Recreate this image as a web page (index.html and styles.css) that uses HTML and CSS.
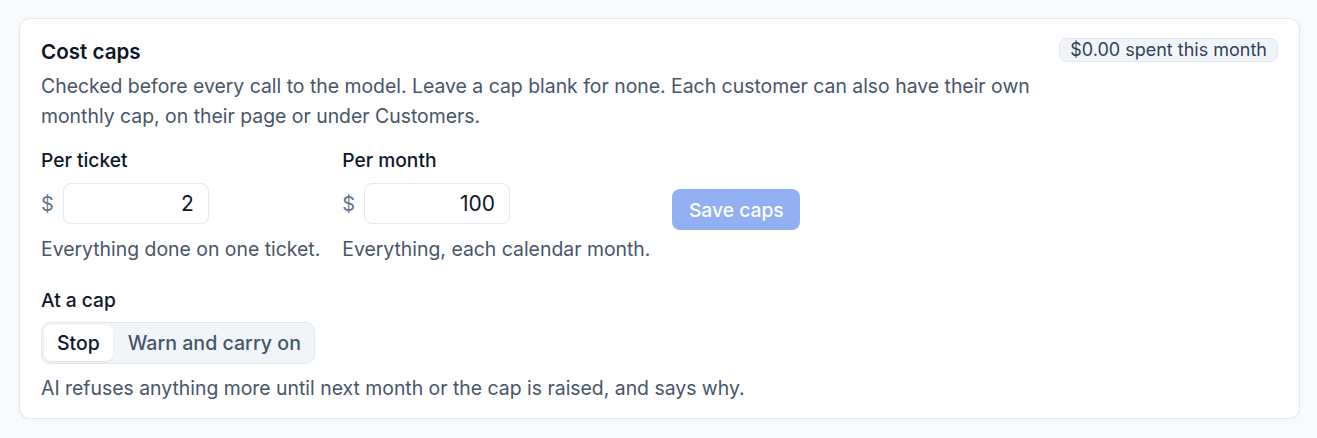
FILE: index.html
```html
<!DOCTYPE html>
<html lang="en">
<head>
<meta charset="utf-8">
<title>Cost caps</title>
<link rel="stylesheet" href="styles.css">
</head>
<body>
<section class="card">
  <div class="head">
    <div class="head-text">
      <h2 class="title">Cost caps</h2>
      <p class="desc">Checked before every call to the model. Leave a cap blank for none. Each customer can also have their own monthly cap, on their page or under Customers.</p>
    </div>
    <span class="badge">$0.00 spent this month</span>
  </div>

  <div class="caps">
    <div class="field">
      <label class="label" for="ticket">Per ticket</label>
      <div class="money">
        <span class="cur">$</span>
        <input class="input" id="ticket" type="text" value="2">
      </div>
      <p class="hint">Everything done on one ticket.</p>
    </div>
    <div class="field">
      <label class="label" for="month">Per month</label>
      <div class="money">
        <span class="cur">$</span>
        <input class="input" id="month" type="text" value="100">
      </div>
      <p class="hint">Everything, each calendar month.</p>
    </div>
    <button class="save" type="button" disabled>Save caps</button>
  </div>

  <div class="atcap">
    <div class="label">At a cap</div>
    <div class="seg">
      <button class="seg-btn active" type="button">Stop</button>
      <button class="seg-btn wide" type="button">Warn and carry on</button>
    </div>
    <p class="hint last">AI refuses anything more until next month or the cap is raised, and says why.</p>
  </div>
</section>
</body>
</html>
```

FILE: styles.css
```css
* { box-sizing: border-box; }
html, body { margin: 0; }
body {
  background: #f8f9fb;
  padding: 18px 17px 0 19px;
  font-family: Inter, "Noto Sans", sans-serif;
  color: #0f172a;
}
.card {
  background: #fff;
  border: 1px solid #e2e8f0;
  border-radius: 11px;
  box-shadow: 0 1px 2px rgba(15, 23, 42, 0.05);
  padding: 19px 21px 15px 21px;
}
.head {
  display: flex;
  justify-content: space-between;
  align-items: flex-start;
  gap: 20px;
}
.head-text { max-width: 1010px; }
.title {
  margin: 0;
  font-size: 20.6px;
  font-weight: 600;
  line-height: 28px;
  color: #0f172a;
}
.desc {
  margin: 5px 0 0;
  font-size: 19.4px;
  line-height: 30px;
  color: #475569;
}
.badge {
  flex: none;
  font-size: 18px;
  line-height: 22px;
  padding: 0 10px;
  color: #334155;
  background: #f1f5f9;
  border: 1px solid #e2e8f0;
  border-radius: 8px;
}
.caps {
  display: flex;
  align-items: center;
  gap: 22px;
  margin-top: 16px;
}
.field { display: flex; flex-direction: column; }
.label {
  font-size: 19.2px;
  font-weight: 500;
  line-height: 26px;
  color: #0f172a;
}
.money {
  display: flex;
  align-items: center;
  gap: 9px;
  margin-top: 10px;
}
.cur {
  font-size: 20px;
  color: #64748b;
}
.input {
  width: 146px;
  height: 41px;
  border: 1px solid #e2e8f0;
  border-radius: 8px;
  background: #fff;
  font-family: inherit;
  font-size: 21px;
  color: #0f172a;
  text-align: right;
  padding: 0 14px;
  outline: none;
}
.hint {
  margin: 10px 0 0;
  font-size: 19.4px;
  line-height: 30px;
  color: #475569;
}
.save {
  margin-top: 8px;
  height: 41px;
  padding: 0 16.5px;
  border: 0;
  border-radius: 8px;
  background: #2563eb;
  opacity: 0.5;
  color: #fff;
  font-family: inherit;
  font-size: 19.3px;
  font-weight: 500;
}
.atcap { margin-top: 23px; }
.seg {
  display: inline-flex;
  margin-top: 9px;
  padding: 2px;
  background: #f1f5f9;
  border: 1px solid #e2e8f0;
  border-radius: 9px;
}
.seg-btn {
  height: 36px;
  padding: 0 13px;
  border: 0;
  background: transparent;
  border-radius: 7px;
  font-family: inherit;
  font-size: 19.4px;
  font-weight: 500;
  color: #475569;
}
.seg-btn.wide { padding: 0 11px 0 15px; font-size: 19.6px; }
.seg-btn.active {
  background: #fff;
  color: #0f172a;
  box-shadow: 0 1px 2px rgba(15, 23, 42, 0.08);
}
.hint.last { margin-top: 9px; }
```
